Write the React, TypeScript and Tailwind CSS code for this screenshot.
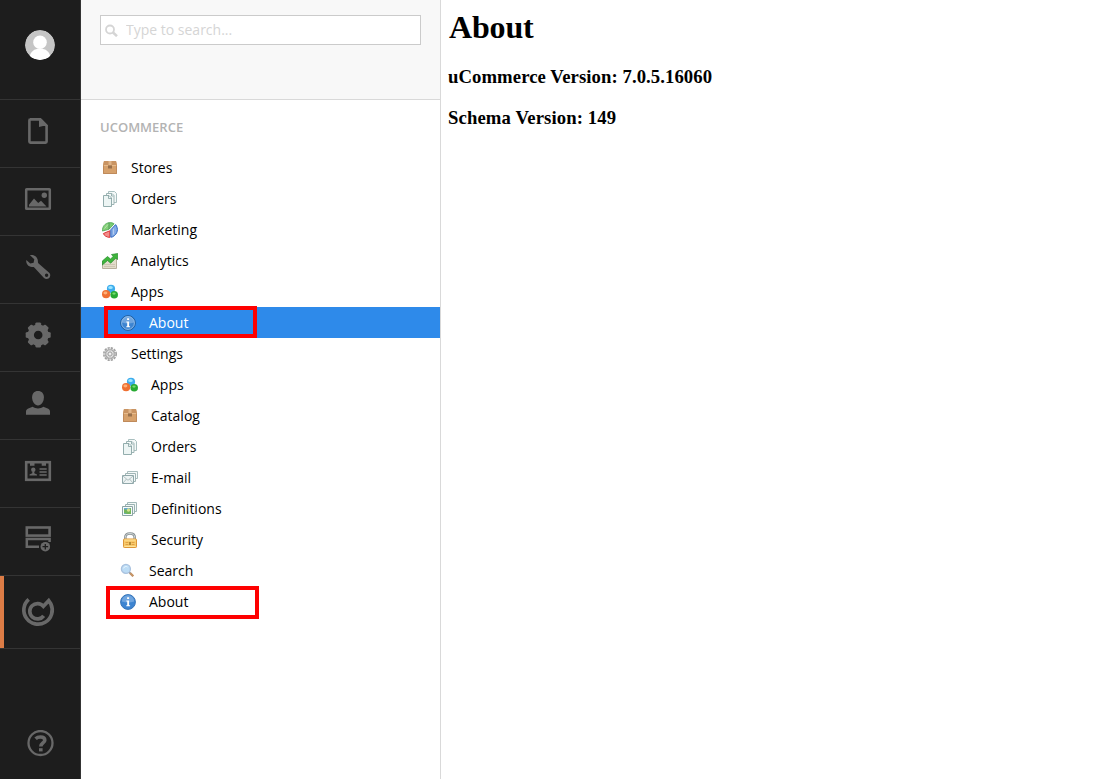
import type { ReactNode } from "react";

const G = "#686868";

function NavIcon({ children }: { children: ReactNode }) {
  return (
    <svg className="h-10 w-10" viewBox="0 0 40 40" fill="none">
      {children}
    </svg>
  );
}

const DocumentIcon = () => (
  <NavIcon>
    <path d="M12 5.400h10.300l6.300 6.400V27.600a1 1 0 0 1-1 1H12.400a1 1 0 0 1-1-1V6.400a1 1 0 0 1 1-1Z" stroke={G} strokeWidth="2.600" />
    <path d="M21 5v8l4-1h4.500v-1L23.500 5Z" fill={G} />
  </NavIcon>
);

const MediaIcon = () => (
  <NavIcon>
    <rect x="8.200" y="7.200" width="23.600" height="19.600" rx=".4" stroke={G} strokeWidth="2.500" />
    <circle cx="26.300" cy="13.300" r="2.700" fill={G} />
    <path d="M11 24.500v-1.700l5-6.300 4.200 4.500 2.800-2.200 5.500 5.700Z" fill={G} />
  </NavIcon>
);

const WrenchIcon = () => (
  <NavIcon>
    <path
      fillRule="evenodd"
      fill={G}
      d="M12 5.200c3.500-.6 7.200 1.400 7.800 5 .2 1.500 0 2.600.8 3.400L31.500 23c1.400 1.700.8 4.100-.6 5.300-1.500 1.200-3.600 1-4.900-.3L16.500 17.800c-.8-.9-1.600-.8-2.700-.8-3.500-.2-6-3-5.500-6.900l4 3.500 3.300-.9.700-3.500ZM28.600 23.600a1.700 1.700 0 1 0 0 3.400 1.700 1.700 0 0 0 0-3.400Z"
    />
  </NavIcon>
);

const GearIcon = () => (
  <NavIcon>
    <circle cx="20.200" cy="17" r="7.400" stroke={G} strokeWidth="6.200" />
    {[0, 45, 90, 135, 180, 225, 270, 315].map((a) => (
      <path key={a} d="M16.800 8.500l.7-3.200q.2-.8 1-.8h3.400q.8 0 1 .8l.7 3.200Z" fill={G} transform={`rotate(${a} 20.200 17)`} />
    ))}
  </NavIcon>
);

const UserIcon = () => (
  <NavIcon>
    <path d="M20 5c3.800 0 5.900 2.700 5.900 6.300 0 4.400-2.600 8.200-5.900 8.200s-5.900-3.800-5.900-8.200C14.100 7.700 16.200 5 20 5Z" fill={G} />
    <path d="M8 28.700v-3.200c0-1.500.9-2.600 2.300-3.100l4.400-1.700c3 2.300 7.600 2.300 10.600 0l4.400 1.700c1.400.5 2.300 1.600 2.300 3.100v3.200Z" fill={G} />
  </NavIcon>
);

const CardIcon = () => (
  <NavIcon>
    <rect x="8.200" y="8.200" width="23.600" height="17.600" stroke={G} strokeWidth="2.600" />
    <path d="M12 8h4.500v3.700H12ZM23.700 8h4.300v3.700h-4.300Z" fill={G} />
    <circle cx="15.300" cy="15.800" r="2.200" fill={G} />
    <path d="M11.500 21.500v-1l2.800-1.200V17.500h2v1.800l2.700 1.200v1Z" fill={G} />
    <path d="M21.500 15h7.200M21.500 18h7.200M21.500 21h7.200" stroke={G} strokeWidth="1.500" />
  </NavIcon>
);

const FormsIcon = () => (
  <NavIcon>
    <rect x="8.800" y="5.500" width="22.800" height="8.100" stroke={G} strokeWidth="2.600" />
    <path d="M21 24.700H8.800v-7.600h22.800v2.900" stroke={G} strokeWidth="2.500" />
    <circle cx="27.300" cy="24.700" r="5.700" fill="#1d1d1d" />
    <circle cx="27.300" cy="24.700" r="4.800" fill={G} />
    <path d="M24.500 24.700h5.600M27.300 21.900v5.600" stroke="#1d1d1d" strokeWidth="1.300" />
  </NavIcon>
);

const CommerceIcon = () => (
  <NavIcon>
    <path
      d="M10.700 9.300A14.200 14.200 0 1 0 32.900 14L30.700 10.700L25.400 16.300A7.700 7.700 0 1 0 25.700 25.800"
      stroke={G}
      strokeWidth="3.700"
      strokeLinejoin="miter"
    />
  </NavIcon>
);

const HelpIcon = () => (
  <svg className="h-[27px] w-[27px]" viewBox="0 0 27 27" fill="none">
    <circle cx="13.500" cy="13" r="12" stroke={G} strokeWidth="2.300" />
    <path d="M8.600 8.700c1.300-1.200 2.900-1.700 4.800-1.700 2.700 0 4.400 1.200 4.400 3.200 0 2.700-4 2.900-4 6.300" stroke={G} strokeWidth="3.600" />
    <path d="M12 18.200h3.600v3.200H12Z" fill={G} />
  </svg>
);

const sections = [DocumentIcon, MediaIcon, WrenchIcon, GearIcon, UserIcon, CardIcon, FormsIcon];

function Icon({ children }: { children: ReactNode }) {
  return (
    <svg className="h-4 w-4 shrink-0" viewBox="0 0 16 16" fill="none">
      {children}
    </svg>
  );
}

const BoxIcon = () => (
  <Icon>
    <path d="M2 1h12l1 4v9H1V5Z" fill="#d6a16c" />
    <path d="M2 1h12l.9 4H1.100Z" fill="#c99463" />
    <path d="M1.500 5.500v8h13v-8" stroke="#bf8a5b" />
    <path d="M6.500 1h3v4h-3Z" fill="#dfb58a" />
    <path d="M6 5.500h4V9L9 8 8 9 7 8 6 9Z" fill="#98714d" />
    <path d="M2 5.500h4M10 5.500h4" stroke="#e6bb8d" />
  </Icon>
);

const PagesIcon = () => (
  <Icon>
    <path d="M6.500.500h6l2 2v9h-8Z" fill="#f4f9f8" stroke="#a9bfbf" />
    <path d="M4.500 2.500h5.500l2 2v9H4.500Z" fill="#f4f9f8" stroke="#9db4b4" />
    <path d="M1.500 4.500h5.500l2.500 2.500v8.500h-8Z" fill="#edf5f4" stroke="#93adad" />
    <path d="M6.500 4.500v3h3M9.500 3v2h2" stroke="#839fa0" strokeWidth=".8" />
  </Icon>
);

const PieIcon = () => (
  <Icon>
    <path d="M7 7.300V.7C3 1.200.3 4.500.4 9Z" fill="#86d079" stroke="#4ba553" strokeWidth=".8" />
    <path d="M7.300.600c2 0 3.600.3 4.800 1.200L7.300 7Z" fill="#7bcb72" stroke="#4ba553" strokeWidth=".8" />
    <path d="M7.800 8.800v6.600C4.500 15.300 2 13.500 1.400 11.500Z" fill="#f28d89" stroke="#dc3639" strokeWidth="1" />
    <path d="M8.800 7.800l4.800-5.200c3 3.700 2.400 9.500-3.200 12.300l-1.600.3Z" fill="#84abe5" stroke="#2f66c0" strokeWidth="1" />
    <path d="M2.500 6.500l3.500-4M11.500 6.500v6" stroke="#fff" strokeOpacity=".4" />
  </Icon>
);

const ChartIcon = () => (
  <Icon>
    <path d="M.500 8.500l5-2 4 1.500L14.500 5v10.500H.500Z" fill="#e2dccb" stroke="#b7af9b" />
    <path d="M2 11.500h11M2 13.500h11" stroke="#cec6b1" />
    <path d="M.300 8L5.500 3.500l3 2.500 2.700-2.500L9.500 1.500 15.700.500v6L13.600 5.200 8.700 10.200 5.500 7.500.300 12Z" fill="#3fb53c" stroke="#258d2c" strokeWidth=".7" />
  </Icon>
);

const BallsIcon = () => (
  <Icon>
    <circle cx="9" cy="4.800" r="4.100" fill="#3eaded" />
    <circle cx="4.100" cy="10.200" r="4.100" fill="#ef7032" />
    <circle cx="12.200" cy="10.800" r="3.800" fill="#27aa32" />
    <ellipse cx="8.500" cy="3.400" rx="2.300" ry="1.500" fill="#9de5ff" />
    <ellipse cx="3.400" cy="9" rx="2" ry="1.400" fill="#ffb078" />
    <ellipse cx="12" cy="9.600" rx="1.700" ry="1.100" fill="#78dd71" />
  </Icon>
);

const InfoIcon = ({ selected }: { selected?: boolean }) => (
  <Icon>
    <circle cx="8" cy="8" r="7.400" fill="#3d84d1" stroke={selected ? "#235f9f" : "#3875b8"} />
    <path d="M1.800 7.500a6.200 6.200 0 0 1 12.400 0q-6.200 2-12.400 0Z" fill="#6fa5df" />
    {selected && <circle cx="8" cy="8" r="6.400" stroke="#9bc4ee" strokeWidth=".8" />}
    <path d="M7.100 3.200h2v1.900h-2ZM6.300 6.400h2.800v5.300H7.200V7.600h-.9ZM6.300 11.200h3.800v1H6.300Z" fill="#fff" />
  </Icon>
);

const CogIcon = () => (
  <Icon>
    <circle cx="8" cy="8" r="6.200" stroke="#a0a0a0" strokeWidth="1.600" strokeDasharray="2.246 1" />
    <circle cx="8" cy="8" r="4.500" fill="#e2e2e2" stroke="#a9a9a9" strokeWidth="1.700" />
    <path d="M8 3v3M8 10v3M3 8h3M10 8h3M4.500 4.500l2 2M9.500 9.500l2 2M4.500 11.500l2-2M9.500 6.500l2-2" stroke="#c9c9c9" strokeWidth=".8" />
    <circle cx="8" cy="8" r="2" fill="#fff" stroke="#929292" strokeWidth=".9" />
    <circle cx="8" cy="8" r=".6" fill="#b9b9b9" />
  </Icon>
);

const MailIcon = () => (
  <Icon>
    <path d="M5.500 1.500h10v7h-10Z" fill="#f5f9f9" stroke="#aabebe" />
    <path d="M3.500 3.500h10v8h-10Z" fill="#f5f9f9" stroke="#a0b5b5" />
    <path d="M.500 5.500h11v8H.500Z" fill="#edf3f3" stroke="#90a8aa" />
    <path d="M1 6l5 4.300L11 6M1 13l3.500-4M11 13L7.500 9" stroke="#a9babb" strokeWidth=".9" />
  </Icon>
);

const DefinitionsIcon = () => (
  <Icon>
    <path d="M5.500 1.500h9v9h-9Z" fill="#f3f8f7" stroke="#a1b8b8" />
    <path d="M3.500 3.500h9v9h-9Z" fill="#f3f8f7" stroke="#9ab2b2" />
    <path d="M.500 5.500h10v9H.500Z" fill="#f8fbfa" stroke="#8ba5a5" />
    <path d="M2 7h7v6H2Z" fill="#68a8d2" />
    <path d="M2 8l3 1 4-2v6H5L2 12Z" fill="#72b55b" />
    <circle cx="6.500" cy="9" r="1.700" fill="#d6e28e" />
  </Icon>
);

const LockIcon = () => (
  <Icon>
    <path d="M3.300 8V5.500c0-2.600 1.700-4 4.700-4s4.700 1.400 4.700 4V8" stroke="#899194" strokeWidth="2.600" />
    <path d="M3.300 8V5.500c0-2.600 1.700-4 4.700-4s4.700 1.400 4.700 4V8" stroke="#ced5d6" strokeWidth="1" />
    <rect x="1.500" y="7" width="13" height="8.500" rx=".8" fill="#f8cb6c" stroke="#dc9637" />
    <path d="M2.500 8h11M2.500 14.500h11" stroke="#ffe49a" />
    <path d="M3.500 10.500h3M9.500 10.500h3M3.500 12.500h3M9.500 12.500h3" stroke="#e1a143" />
    <path d="M8 10v3" stroke="#8f681c" strokeWidth="1.300" />
  </Icon>
);

const MagnifierIcon = () => (
  <Icon>
    <path d="M8.500 8.500l4.500 4.500" stroke="#99938f" strokeWidth="1.800" />
    <path d="M10.300 10.300l3 3" stroke="#c89565" strokeWidth="2.200" />
    <circle cx="5.900" cy="5.900" r="4.500" fill="#bcdcf5" stroke="#a9c2df" strokeWidth="1.300" />
    <path d="M3.400 5.400C4.200 3.500 6.200 3 7.500 4" stroke="#edf8ff" />
  </Icon>
);

type Item = {
  label: string;
  icon: (props: { selected?: boolean }) => ReactNode;
  pad: string;
  selected?: boolean;
  mark?: string;
};

const items: Item[] = [
  { label: "Stores", icon: BoxIcon, pad: "pl-[21px]" },
  { label: "Orders", icon: PagesIcon, pad: "pl-[21px]" },
  { label: "Marketing", icon: PieIcon, pad: "pl-[21px]" },
  { label: "Analytics", icon: ChartIcon, pad: "pl-[21px]" },
  { label: "Apps", icon: BallsIcon, pad: "pl-[21px]" },
  { label: "About", icon: InfoIcon, pad: "pl-[39px]", selected: true, mark: "left-[23px] -top-px h-8" },
  { label: "Settings", icon: CogIcon, pad: "pl-[21px]" },
  { label: "Apps", icon: BallsIcon, pad: "pl-[41px]" },
  { label: "Catalog", icon: BoxIcon, pad: "pl-[41px]" },
  { label: "Orders", icon: PagesIcon, pad: "pl-[41px]" },
  { label: "E-mail", icon: MailIcon, pad: "pl-[41px]" },
  { label: "Definitions", icon: DefinitionsIcon, pad: "pl-[41px]" },
  { label: "Security", icon: LockIcon, pad: "pl-[41px]" },
  { label: "Search", icon: MagnifierIcon, pad: "pl-[39px]" },
  { label: "About", icon: InfoIcon, pad: "pl-[39px]", mark: "left-[25px] top-0 h-[33px]" },
];

export default function App() {
  return (
    <div className="flex h-[779px] w-[1111px] overflow-hidden bg-white font-['Open_Sans',sans-serif] text-sm text-black">
      <nav className="flex w-[81px] shrink-0 flex-col border-r border-[#343434] bg-[#1d1d1d]">
        <div className="h-[100px] border-b border-[#343434] pt-[30px] pl-[25px]">
          <svg className="h-[30px] w-[30px] rounded-full" viewBox="0 0 30 30">
            <circle cx="15" cy="15" r="15" fill="#c5c5c5" />
            <circle cx="15" cy="12.300" r="6.800" fill="#fff" />
            <path d="M4.500 27c1-5 4.500-8.500 10.500-8.500S24.500 22 25.500 27Q21 30 15 30T4.500 27Z" fill="#fff" />
          </svg>
        </div>
        {sections.map((Section, i) => (
          <div key={i} className="h-[68px] border-b border-[#343434] pt-3.5 pl-[18px]">
            <Section />
          </div>
        ))}
        <div className="flex h-[73px] border-b border-[#343434]">
          <div className="w-1 bg-[#dc7c46]" />
          <div className="pt-3.5 pl-3.5">
            <CommerceIcon />
          </div>
        </div>
        <div className="mt-auto pb-[22px] pl-[27px]">
          <HelpIcon />
        </div>
      </nav>

      <aside className="flex w-[360px] shrink-0 flex-col border-r border-[#d9d9d9]">
        <header className="h-[100px] border-b border-[#d9d9d9] bg-[#f8f8f8] pt-[15px] pl-[19px]">
          <div className="flex h-[30px] w-[321px] items-center border border-[#cbcbcb] bg-white pl-1">
            <svg className="h-[13px] w-[13px]" viewBox="0 0 13 13" fill="none">
              <circle cx="5" cy="5.500" r="4" stroke="#d5d5d5" strokeWidth="1.800" />
              <path d="M8 8.500l4 3.700" stroke="#d5d5d5" strokeWidth="2.500" />
            </svg>
            <input
              className="ml-2 w-60 bg-transparent text-sm outline-none placeholder:text-[#d5d5d5]"
              placeholder="Type to search..."
            />
          </div>
        </header>
        <h2 className="h-[52px] pt-[17px] pl-[19px] text-[13px] leading-5 font-semibold text-[#b3b3b3]">UCOMMERCE</h2>
        <ul>
          {items.map(({ label, icon: ItemIcon, pad, selected, mark }, i) => (
            <li
              key={i}
              className={`relative flex h-[31px] items-center gap-[13px] ${pad} ${selected ? "bg-[#2e8aea] text-white" : ""}`}
            >
              <ItemIcon selected={selected} />
              <span>{label}</span>
              {mark && <span className={`absolute w-[153px] border-4 border-[#fe0000] ${mark}`} />}
            </li>
          ))}
        </ul>
      </aside>

      <main className="pt-[9px] pl-[7px] font-['Liberation_Serif',serif] font-bold">
        <h1 className="pl-px text-[32px] leading-[37px] tracking-[-0.150px]">About</h1>
        <h3 className="mt-5 text-[18.720px] leading-[22px] tracking-[0.070px]">uCommerce Version: 7.0.5.16060</h3>
        <h3 className="mt-[19px] text-[18.720px] leading-[22px] tracking-[0.100px]">Schema Version: 149</h3>
      </main>
    </div>
  );
}
